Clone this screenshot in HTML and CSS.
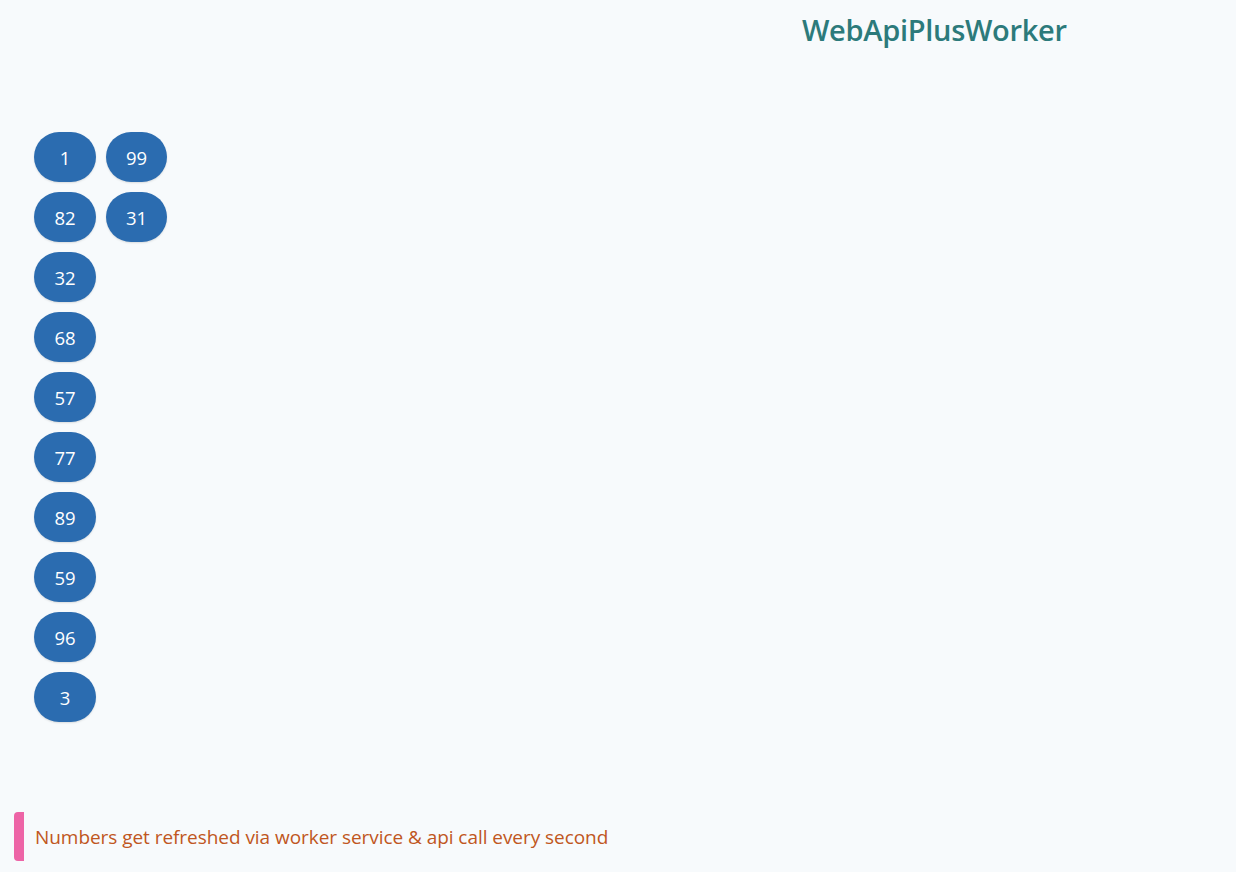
FILE: index.html
```html
<!DOCTYPE html>
<html>
<head>
<meta charset="utf-8">
<link rel="stylesheet" href="styles.css">
</head>
<body>
<header class="top">
  <h1 class="title">WebApiPlusWorker</h1>
</header>
<main class="numbers">
  <div class="row"><span class="pill">1</span><span class="pill">99</span></div>
  <div class="row"><span class="pill">82</span><span class="pill">31</span></div>
  <div class="row"><span class="pill">32</span></div>
  <div class="row"><span class="pill">68</span></div>
  <div class="row"><span class="pill">57</span></div>
  <div class="row"><span class="pill">77</span></div>
  <div class="row"><span class="pill">89</span></div>
  <div class="row"><span class="pill">59</span></div>
  <div class="row"><span class="pill">96</span></div>
  <div class="row"><span class="pill">3</span></div>
</main>
<footer class="note">
  <div class="bar"></div>
  <p class="note-text">Numbers get refreshed via worker service &amp; api call every second</p>
</footer>
</body>
</html>
```

FILE: styles.css
```css
html, body {
  margin: 0;
  padding: 0;
  background: #f7fafc;
  font-family: "Open Sans", "Noto Sans", sans-serif;
  height: 872px;
  overflow: hidden;
}
body {
  display: flex;
  flex-direction: column;
}
.top {
  height: 132px;
  display: flex;
  justify-content: flex-start;
}
.title {
  margin: 10px 0 0 802px;
  font-size: 29px;
  font-weight: 600;
  color: #2c7a7b;
  letter-spacing: -0.3px;
  line-height: 40px;
}
.numbers {
  display: flex;
  flex-direction: column;
  gap: 10px;
  padding-left: 34px;
}
.row {
  display: flex;
  gap: 10px;
}
.pill {
  width: 62px;
  height: 50px;
  border-radius: 25px;
  background: #2b6cb0;
  color: #fff;
  font-size: 18.5px;
  display: flex;
  align-items: center;
  justify-content: center;
  padding-top: 1px;
  box-sizing: border-box;
  box-shadow: 0 1px 2px rgba(0,0,0,0.12);
}
.pill:nth-child(2) {
  width: 61px;
}
.note {
  margin-top: auto;
  margin-bottom: 11px;
  display: flex;
  align-items: center;
  padding-left: 14px;
  height: 49px;
}
.bar {
  width: 10px;
  height: 49px;
  background: #ed64a6;
  border-radius: 4px 0 0 4px;
}
.note-text {
  margin: 1px 0 0 11px;
  color: #c05621;
  font-size: 19px;
  letter-spacing: -0.05px;
}
```
